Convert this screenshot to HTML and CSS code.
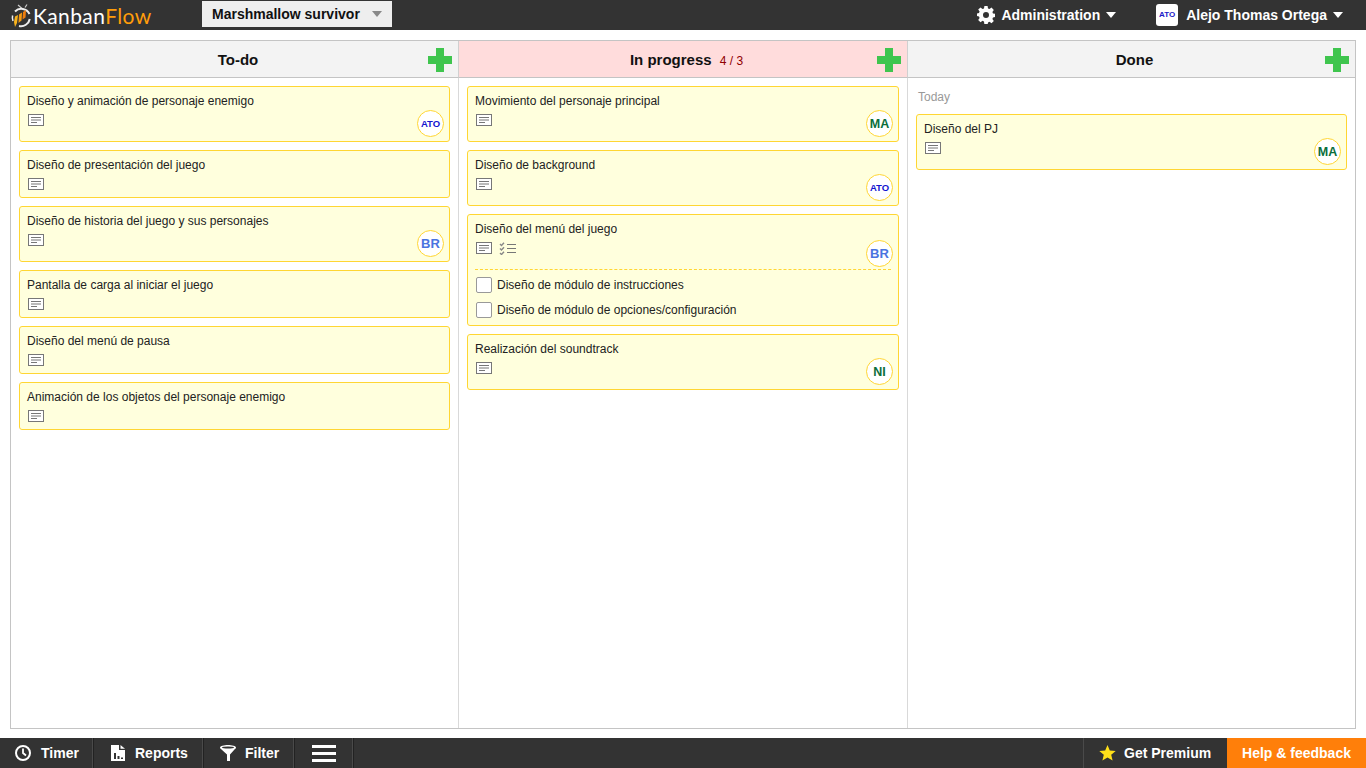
FILE: index.html
```html
<!DOCTYPE html>
<html lang="en">
<head>
    <meta charset="UTF-8">
    <title>Marshmallow survivor - KanbanFlow</title>
    <link rel="stylesheet" href="styles.css">
</head>
<body>

<svg class="defs" width="0" height="0">
    <symbol id="note" viewBox="0 0 16 12">
        <rect x="0.5" y="0.5" width="15" height="11" fill="#fff" stroke="#777"/>
        <path d="M3 3.500h10M3 6h10M3 8.500h6" stroke="#777" fill="none"/>
    </symbol>
    <symbol id="plus" viewBox="0 0 24 24">
        <path d="M8 0h8v8h8v8h-8v8H8v-8H0V8h8z" fill="#3fc54e"/>
    </symbol>
</svg>

<header class="topbar">
    <a class="logo">
        <svg class="logo-mark" width="22" height="28" viewBox="0 0 22 28">
            <path d="M8 4l4 3.500M17 3.500l-2 3" stroke="#ccc" stroke-width="1.200" fill="none"/>
            <path d="M5 10.500A9 9 0 0 1 19.500 13M19.800 18A9 9 0 0 1 9 25" fill="none" stroke="#eee" stroke-width="2"/>
            <path d="M2.600 14.500A9 9 0 0 0 3 20" fill="none" stroke="#eee" stroke-width="1.500"/>
            <path d="M5 15.500l3-1.500-1 8-2 4-1-5z" fill="#f9b31c"/>
            <path d="M9 13.500l3-2-.5 8L8.500 22z" fill="#f59a12"/>
            <path d="M13 11l3-2-.5 7.500-3 2z" fill="#ee7d0c"/>
        </svg>
        <span class="logo-text">Kanban<span class="logo-flow">Flow</span></span>
    </a>
    <div class="board-picker">
        <span>Marshmallow survivor</span>
        <i class="caret caret-grey"></i>
    </div>
    <div class="topbar-right">
        <div class="top-link admin">
            <svg width="18" height="18" viewBox="0 0 18 18">
                <path fill="#fff" fill-rule="evenodd" d="M7.400 0h3.200l.4 2.400 1.500.6 2-1.400 2.300 2.300-1.400 2 .6 1.500 2.400.4v3.200l-2.400.4-.6 1.500 1.400 2-2.300 2.300-2-1.400-1.500.6-.4 2.400H7.400L7 15.400 5.500 14.800l-2 1.400-2.300-2.300 1.400-2-.6-1.500L0 10V7.400l2-.4.6-1.500-1.400-2L3.500 1.600l2 1.400L7 2.400zM9 6a3 3 0 1 0 0 6 3 3 0 0 0 0-6z"/>
            </svg>
            <span>Administration</span>
            <i class="caret"></i>
        </div>
        <div class="top-link user">
            <span class="user-pic">ATO</span>
            <span>Alejo Thomas Ortega</span>
            <i class="caret"></i>
        </div>
    </div>
</header>

<main class="content">
    <div class="board">
        <section class="column col-first">
            <div class="column-head">
                <h2>To-do</h2>
                <svg class="add"><use href="#plus"/></svg>
            </div>
            <div class="cards">
                <article class="card tall">
                    <p>Diseño y animación de personaje enemigo</p>
                    <svg class="note"><use href="#note"/></svg>
                    <span class="avatar ato">ATO</span>
                </article>
                <article class="card">
                    <p>Diseño de presentación del juego</p>
                    <svg class="note"><use href="#note"/></svg>
                </article>
                <article class="card tall">
                    <p>Diseño de historia del juego y sus personajes</p>
                    <svg class="note"><use href="#note"/></svg>
                    <span class="avatar br">BR</span>
                </article>
                <article class="card">
                    <p>Pantalla de carga al iniciar el juego</p>
                    <svg class="note"><use href="#note"/></svg>
                </article>
                <article class="card">
                    <p>Diseño del menú de pausa</p>
                    <svg class="note"><use href="#note"/></svg>
                </article>
                <article class="card">
                    <p>Animación de los objetos del personaje enemigo</p>
                    <svg class="note"><use href="#note"/></svg>
                </article>
            </div>
        </section>

        <section class="column col-second">
            <div class="column-head over-limit">
                <h2>In progress <span class="wip">4 / 3</span></h2>
                <svg class="add"><use href="#plus"/></svg>
            </div>
            <div class="cards">
                <article class="card tall">
                    <p>Movimiento del personaje principal</p>
                    <svg class="note"><use href="#note"/></svg>
                    <span class="avatar ma">MA</span>
                </article>
                <article class="card tall">
                    <p>Diseño de background</p>
                    <svg class="note"><use href="#note"/></svg>
                    <span class="avatar ato">ATO</span>
                </article>
                <article class="card with-tasks">
                    <div class="card-top">
                        <p>Diseño del menú del juego</p>
                        <div class="card-icons">
                            <svg class="note"><use href="#note"/></svg>
                            <svg class="checklist" width="18" height="13" viewBox="0 0 18 13">
                                <path d="M1 2l1.500 1.500L5 .8M1 6.500L2.500 8 5 5.300M1 11l1.500 1.500L5 9.800" stroke="#888" stroke-width="1.400" fill="none"/>
                                <path d="M8 2.500h9M8 6.500h9M8 10.500h9" stroke="#777" fill="none"/>
                            </svg>
                        </div>
                        <span class="avatar br">BR</span>
                    </div>
                    <ul class="subtasks">
                        <li><span class="checkbox"></span>Diseño de módulo de instrucciones</li>
                        <li><span class="checkbox"></span>Diseño de módulo de opciones/configuración</li>
                    </ul>
                </article>
                <article class="card tall">
                    <p>Realización del soundtrack</p>
                    <svg class="note"><use href="#note"/></svg>
                    <span class="avatar ni">NI</span>
                </article>
            </div>
        </section>

        <section class="column col-third">
            <div class="column-head">
                <h2>Done</h2>
                <svg class="add"><use href="#plus"/></svg>
            </div>
            <div class="cards">
                <div class="date-label">Today</div>
                <article class="card tall">
                    <p>Diseño del PJ</p>
                    <svg class="note"><use href="#note"/></svg>
                    <span class="avatar ma">MA</span>
                </article>
            </div>
        </section>
    </div>
</main>

<footer class="bottombar">
    <div class="tool tool-timer">
        <svg width="18" height="18" viewBox="0 0 18 18">
            <circle cx="9" cy="9" r="7" fill="none" stroke="#fff" stroke-width="2"/>
            <path d="M9 4.500V9l3 2.500" fill="none" stroke="#fff" stroke-width="1.800"/>
        </svg>
        <span>Timer</span>
    </div>
    <div class="tool tool-reports">
        <svg width="16" height="18" viewBox="0 0 16 18">
            <path fill="#fff" d="M1 1h8v5h6v11H1z"/>
            <path fill="#fff" d="M10.500 1L15 4.800h-4.500z"/>
            <path fill="#333" d="M4 9h2v6H4zM7.500 12h2v3h-2zM11 13.500h2V15h-2z"/>
        </svg>
        <span>Reports</span>
    </div>
    <div class="tool tool-filter">
        <svg width="18" height="18" viewBox="0 0 18 18">
            <path fill="#fff" d="M1 3.500C1 2 5 1 9 1s8 1 8 2.500c0 1-1 1.500-1.500 2L11 10.500V17H8v-6.500L2.500 5.500C2 5 1 4.500 1 3.500z"/>
            <ellipse cx="9" cy="3.500" rx="6" ry="1" fill="#333"/>
        </svg>
        <span>Filter</span>
    </div>
    <div class="tool tool-menu">
        <span class="burger"></span>
    </div>
    <div class="bottom-right">
        <div class="tool tool-premium">
            <svg width="17" height="16" viewBox="0 0 17 16">
                <path fill="#ffe01a" d="M8.500 0l2.300 5.500 5.900.5-4.500 3.800 1.400 5.800-5.100-3.100-5.100 3.100 1.400-5.800L.3 6l5.900-.5z"/>
            </svg>
            <span>Get Premium</span>
        </div>
        <div class="help">Help &amp; feedback</div>
    </div>
</footer>

</body>
</html>
```

FILE: styles.css
```css
* {
    box-sizing: border-box;
}
html, body {
    height: 100%;
}
body {
    margin: 0;
    display: flex;
    flex-direction: column;
    height: 768px;
    overflow: hidden;
    background-color: #fff;
    color: #222;
    font-family: "Liberation Sans", Arial, sans-serif;
    font-size: 12px;
}
.defs {
    position: absolute;
}

/* top bar */
.topbar {
    display: flex;
    align-items: center;
    flex: 0 0 30px;
    background-color: #333;
    color: #fff;
    font-size: 14px;
    font-weight: bold;
}
.logo {
    display: flex;
    align-items: center;
    width: 202px;
    padding-left: 10px;
}
.logo-mark {
    flex: none;
}
.logo-text {
    margin-left: 1px;
    font-family: Lato, sans-serif;
    font-size: 21px;
    font-weight: 400;
    letter-spacing: 0.4px;
}
.logo-flow {
    color: #ff9d0a;
}
.board-picker {
    display: flex;
    align-items: center;
    width: 190px;
    height: 26px;
    margin-bottom: 2px;
    padding-left: 10px;
    background-color: #eee;
    color: #111;
}
.board-picker .caret {
    margin-left: 12px;
}
.caret {
    display: inline-block;
    width: 0;
    height: 0;
    border-left: 5.500px solid transparent;
    border-right: 5.500px solid transparent;
    border-top: 6px solid #fff;
}
.caret-grey {
    border-top-color: #888;
}
.topbar-right {
    display: flex;
    align-items: center;
    margin-left: auto;
    padding-right: 23px;
}
.top-link {
    display: flex;
    align-items: center;
}
.admin svg + span {
    margin-left: 6px;
}
.top-link .caret {
    margin-left: 6px;
}
.user {
    margin-left: 40px;
}
.user-pic {
    width: 22px;
    height: 22px;
    border-radius: 3px;
    background-color: #fff;
    color: #1a1ac8;
    font-size: 8px;
    line-height: 22px;
    text-align: center;
}
.user-pic + span {
    margin-left: 8px;
}

/* board */
.content {
    flex: 1;
    min-height: 0;
    padding: 10px 10px 9px;
}
.board {
    display: grid;
    grid-template-columns: 448px 449px 1fr;
    height: 100%;
    border: 1px solid #c4c4c4;
}
.column {
    position: relative;
}
.col-first,
.col-second {
    border-right: 1px solid #d9d9d9;
}
.column-head {
    position: relative;
    height: 37px;
    padding-left: 7px;
    background-color: #f3f3f3;
    border-bottom: 1px solid #c4c4c4;
}
.col-third .column-head {
    padding-left: 6px;
}
.col-first .column-head,
.col-second .column-head {
    margin-right: -1px;
    border-right: 1px solid #d0d0d0;
}
.over-limit {
    background-color: #ffdcdc;
}
.column-head h2 {
    margin: 0;
    color: #111;
    font-size: 15px;
    line-height: 38px;
    text-align: center;
}
.wip {
    margin-left: 4px;
    color: #900000;
    font-size: 12px;
    font-weight: normal;
}
.add {
    position: absolute;
    top: 7px;
    right: 6px;
    width: 24px;
    height: 24px;
}
.cards {
    display: flex;
    flex-direction: column;
    gap: 8px;
    padding: 8px;
}
.date-label {
    height: 20px;
    padding-left: 2px;
    color: #999;
    line-height: 22px;
}

/* cards */
.card {
    position: relative;
    height: 48px;
    padding: 6px 7px;
    background-color: #ffffdd;
    border: 1px solid #ffd633;
    border-radius: 3px;
}
.card.tall {
    height: 56px;
}
.card.with-tasks {
    height: 112px;
    padding: 0;
}
.card p {
    margin: 0;
    height: 16px;
    line-height: 16px;
}
.note {
    display: block;
    width: 16px;
    height: 12px;
    margin: 5px 0 0 1px;
}
.card-top {
    position: relative;
    height: 54px;
    padding: 6px 7px;
}
.card-icons {
    display: flex;
    align-items: flex-start;
}
.checklist {
    margin: 5px 0 0 7px;
}
.avatar {
    position: absolute;
    right: 5px;
    bottom: 4px;
    width: 27px;
    height: 27px;
    border: 1px solid #ffd633;
    border-radius: 50%;
    background-color: #fff;
    font-size: 12.500px;
    font-weight: bold;
    line-height: 26px;
    text-align: center;
}
.card-top .avatar {
    bottom: 2px;
}
.ato {
    color: #1414d0;
    font-size: 9.500px;
}
.br {
    color: #4a74e0;
    font-size: 13px;
}
.ma {
    color: #0b6e3a;
}
.ni {
    color: #0b6e3a;
}
.subtasks {
    margin: 0 7px;
    padding: 7px 0 0 1px;
    list-style: none;
    border-top: 1px dashed #ffd633;
}
.subtasks li {
    display: flex;
    align-items: center;
    height: 16px;
    margin-bottom: 9px;
}
.checkbox {
    width: 16px;
    height: 16px;
    margin-right: 5px;
    background-color: #fff;
    border: 1px solid #999;
    border-radius: 2px;
}

/* bottom bar */
.bottombar {
    display: flex;
    flex: 0 0 30px;
    background-color: #333;
    color: #fff;
    font-size: 14px;
    font-weight: bold;
}
.tool {
    display: flex;
    align-items: center;
    height: 100%;
    border-right: 1px solid #4a4a4a;
    box-shadow: 1px 0 0 #222;
}
.tool-timer {
    width: 93px;
    margin-right: 1px;
    padding-left: 14px;
}
.tool-timer span {
    margin-left: 9px;
}
.tool-reports {
    width: 109px;
    margin-right: 1px;
    padding-left: 16px;
}
.tool-reports span {
    margin-left: 9px;
}
.tool-filter {
    width: 90px;
    margin-right: 1px;
    padding-left: 15px;
}
.tool-filter span {
    margin-left: 8px;
}
.tool-menu {
    width: 58px;
    padding-left: 17px;
}
.burger {
    width: 24px;
    height: 17px;
    border-top: 3px solid #fff;
    border-bottom: 3px solid #fff;
    background: linear-gradient(#fff, #fff) center / 100% 3px no-repeat;
}
.bottom-right {
    display: flex;
    margin-left: auto;
}
.tool-premium {
    width: 144px;
    padding-left: 15px;
    border-left: 1px solid #4a4a4a;
    border-right: none;
    box-shadow: none;
}
.tool-premium span {
    margin-left: 8px;
}
.help {
    width: 139px;
    background-color: #ff7f0a;
    line-height: 30px;
    text-align: center;
}
```
